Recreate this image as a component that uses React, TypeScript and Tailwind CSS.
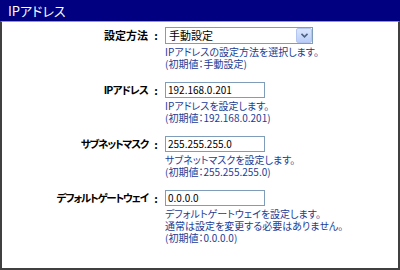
import React from "react";

const font = { fontFamily: '"Noto Sans CJK JP", "Liberation Sans", sans-serif' };

function Row({
  label,
  track,
  control,
  help,
}: {
  label: string;
  track: string;
  control: React.ReactNode;
  help: string[];
}) {
  return (
    <div className="flex">
      <div className="w-[163px] shrink-0 h-[16px] flex items-center justify-end pr-[4px] text-[11px] font-bold text-black leading-none whitespace-nowrap">
        <span className={`[font-feature-settings:'palt'] ${track}`}>{label}</span>
        <span className="ml-[3px] w-[10px] text-center">:</span>
      </div>
      <div className="flex flex-col">
        {control}
        <div className="mt-[2px] text-[10px] leading-[12px] text-[#1d3c94] whitespace-nowrap [font-feature-settings:'palt']">
          {help.map((h, i) => (
            <div key={i}>{h}</div>
          ))}
        </div>
      </div>
    </div>
  );
}

function TextBox({ value }: { value: string }) {
  return (
    <div className="w-[100px] h-[16px] border border-[#7f9db9] bg-white flex items-center pl-[2px] text-[10px] text-black leading-none">
      {value}
    </div>
  );
}

function SelectBox() {
  return (
    <div className="w-[148px] h-[17px] border border-[#7f9db9] bg-white flex items-center justify-between">
      <span className="pl-[3px] text-[11px] text-black leading-none">手動設定</span>
      <div className="w-[16px] h-[15px] bg-gradient-to-b from-[#dbe6fd] to-[#b8cdf8] border border-[#b4c6f0] rounded-[2px] flex items-center justify-center">
        <svg width="7" height="5" viewBox="0 0 7 5">
          <path d="M0.5 0.8 L3.5 3.8 L6.5 0.8" fill="none" stroke="#4d6185" strokeWidth="1.6" />
        </svg>
      </div>
    </div>
  );
}

export default function App() {
  return (
    <div className="w-[400px] h-[270px] bg-white flex flex-col" style={font}>
      <div className="h-[21px] bg-[#000080] flex items-center pl-[8px] text-white text-[13px] leading-none [font-feature-settings:'palt']">
        IPアドレス
      </div>
      <div className="flex-1 border-x-2 border-b-2 border-t border-[#404040] border-t-[#9a9a9a] pt-[5px] flex flex-col gap-[12px]">
        <Row
          label="設定方法"
          track="tracking-[0px]"
          control={<SelectBox />}
          help={["IPアドレスの設定方法を選択します。", "(初期値：手動設定)"]}
        />
        <Row
          label="IPアドレス"
          track="tracking-[-0.8px] text-[10.5px]"
          control={<TextBox value="192.168.0.201" />}
          help={["IPアドレスを設定します。", "(初期値：192.168.0.201)"]}
        />
        <Row
          label="サブネットマスク"
          track="tracking-[-1.2px] text-[10.5px]"
          control={<TextBox value="255.255.255.0" />}
          help={["サブネットマスクを設定します。", "(初期値：255.255.255.0)"]}
        />
        <Row
          label="デフォルトゲートウェイ"
          track="tracking-[-1.2px] text-[10.5px]"
          control={<TextBox value="0.0.0.0" />}
          help={[
            "デフォルトゲートウェイを設定します。",
            "通常は設定を変更する必要はありません。",
            "(初期値：0.0.0.0)",
          ]}
        />
      </div>
    </div>
  );
}
